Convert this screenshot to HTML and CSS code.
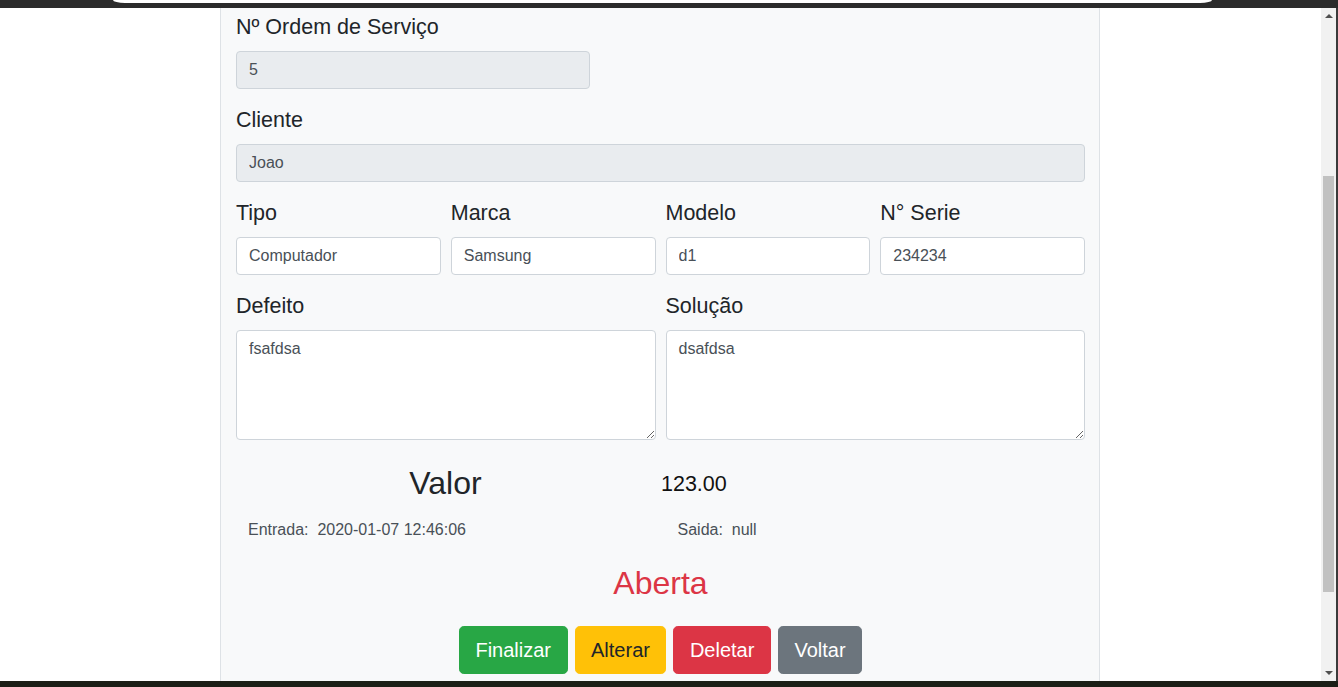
FILE: index.html
```html
<!DOCTYPE html>
<html lang="pt-BR">
<head>
<meta charset="utf-8">
<title>Ordem de Serviço</title>
<link rel="stylesheet" href="styles.css">
</head>
<body>
<div class="screen">
  <div class="topbar"><div class="omnibox"></div></div>
  <div class="middle">
    <div class="viewport">
      <main class="sheet">
        <div class="field">
          <label class="label">Nº Ordem de Serviço</label>
          <input class="control disabled short" value="5" disabled>
        </div>
        <div class="field">
          <label class="label">Cliente</label>
          <input class="control disabled" value="Joao" disabled>
        </div>
        <div class="row4">
          <div class="field">
            <label class="label">Tipo</label>
            <input class="control" value="Computador">
          </div>
          <div class="field">
            <label class="label">Marca</label>
            <input class="control" value="Samsung">
          </div>
          <div class="field">
            <label class="label">Modelo</label>
            <input class="control" value="d1">
          </div>
          <div class="field">
            <label class="label">N° Serie</label>
            <input class="control" value="234234">
          </div>
        </div>
        <div class="row2">
          <div class="field">
            <label class="label">Defeito</label>
            <textarea class="control area">fsafdsa</textarea>
          </div>
          <div class="field">
            <label class="label">Solução</label>
            <textarea class="control area">dsafdsa</textarea>
          </div>
        </div>
        <div class="value-row">
          <h2 class="value-title">Valor</h2>
          <p class="value-amount">123.00</p>
        </div>
        <div class="dates-row">
          <p class="date">Entrada:&nbsp; 2020-01-07 12:46:06</p>
          <p class="date">Saida:&nbsp; null</p>
        </div>
        <h2 class="status">Aberta</h2>
        <div class="actions">
          <button class="btn btn-success">Finalizar</button>
          <button class="btn btn-warning">Alterar</button>
          <button class="btn btn-danger">Deletar</button>
          <button class="btn btn-secondary">Voltar</button>
        </div>
      </main>
    </div>
    <div class="scrollbar">
      <div class="sb-btn"><span class="tri up"></span></div>
      <div class="sb-track"><div class="sb-thumb"></div></div>
      <div class="sb-btn"><span class="tri down"></span></div>
    </div>
    <div class="edge"></div>
  </div>
  <div class="bottombar"></div>
</div>
</body>
</html>
```
FILE: styles.css
```css
* { box-sizing: border-box; }
html, body { margin: 0; padding: 0; overflow: hidden; }
body {
  font-family: "Liberation Sans", Arial, sans-serif;
  color: #212529;
  background: #fff;
}
.screen {
  width: 1338px;
  height: 687px;
  display: flex;
  flex-direction: column;
}
.topbar {
  height: 8px;
  background: #2b2b2b;
  flex: none;
}
.omnibox {
  margin-left: 113px;
  width: 1099px;
  height: 3px;
  background: #fff;
  border-radius: 0 0 12px 12px / 0 0 3px 3px;
}
.middle {
  flex: 1;
  display: flex;
  min-height: 0;
}
.viewport {
  flex: 1;
  overflow: hidden;
  background: #fff;
}
.sheet {
  width: 880px;
  height: 100%;
  margin-left: 220px;
  background: #f8f9fa;
  border-left: 1px solid #dee2e6;
  border-right: 1px solid #dee2e6;
  padding: 4px 14px 0 15px;
}
.field { margin-bottom: 16px; }
.label {
  display: block;
  font-size: 21.5px;
  line-height: 31px;
  margin-bottom: 8px;
  color: #212529;
}
.control {
  display: block;
  width: 100%;
  height: 38px;
  padding: 6px 12px;
  font-family: "Liberation Sans", Arial, sans-serif;
  font-size: 16px;
  line-height: 24px;
  color: #495057;
  background: #fff;
  border: 1px solid #ced4da;
  border-radius: 4px;
  margin: 0;
}
.control.disabled { background: #e9ecef; opacity: 1; }
.control.short { width: 354px; }
.control.area { height: 110px; resize: vertical; }
.row4 {
  display: grid;
  grid-template-columns: repeat(4, 1fr);
  column-gap: 10px;
}
.row2 {
  display: grid;
  grid-template-columns: 1fr 1fr;
  column-gap: 10px;
}
.value-row {
  display: grid;
  grid-template-columns: 419px 1fr;
  column-gap: 6px;
  align-items: start;
  margin-top: 8px;
}
.value-title {
  margin: 0;
  font-size: 32px;
  line-height: 38px;
  font-weight: 400;
  text-align: center;
  color: #212529;
}
.value-amount {
  margin: 6.5px 0 0;
  font-size: 21.5px;
  line-height: 26px;
  color: #111;
}
.dates-row {
  display: grid;
  grid-template-columns: 1fr 1fr;
  column-gap: 10px;
  margin-top: 15.5px;
}
.date {
  margin: 0;
  padding-left: 12px;
  font-size: 16px;
  line-height: 24px;
  color: #495057;
}
.status {
  margin: 22.5px 0 0;
  font-size: 32px;
  line-height: 38px;
  font-weight: 400;
  text-align: center;
  color: #dc3545;
}
.actions {
  display: flex;
  justify-content: center;
  gap: 7px;
  margin-top: 24px;
}
.btn {
  font-family: "Liberation Sans", Arial, sans-serif;
  font-size: 20px;
  line-height: 30px;
  padding: 8px 15.5px;
  border: 1px solid transparent;
  border-radius: 4.8px;
  color: #fff;
  cursor: pointer;
}
.btn-success { background: #28a745; border-color: #28a745; }
.btn-warning { background: #ffc107; border-color: #ffc107; color: #212529; }
.btn-danger { background: #dc3545; border-color: #dc3545; }
.btn-secondary { background: #6c757d; border-color: #6c757d; }
.scrollbar {
  width: 15px;
  flex: none;
  background: #f1f1f1;
  display: flex;
  flex-direction: column;
}
.sb-btn {
  height: 16px;
  display: flex;
  align-items: center;
  justify-content: center;
  flex: none;
}
.tri {
  width: 0;
  height: 0;
  border-left: 4px solid transparent;
  border-right: 4px solid transparent;
}
.tri.up { border-bottom: 4px solid #505050; }
.tri.down { border-top: 4px solid #505050; }
.sb-track { flex: 1; padding: 0 2px; }
.sb-thumb {
  margin-top: 152px;
  height: 416px;
  background: #c1c1c1;
}
.edge {
  width: 2px;
  flex: none;
  background: #3a3a3a;
}
.bottombar {
  height: 6px;
  flex: none;
  background: #1b1e16;
}
```
